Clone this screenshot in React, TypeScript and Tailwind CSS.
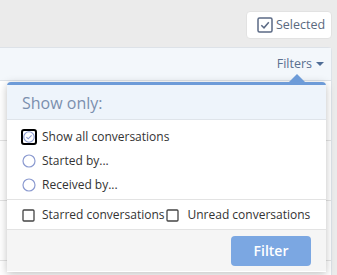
import React from 'react';

const RadioIcon = () => (
  <svg width="14" height="14" viewBox="0 0 14 14" className="shrink-0">
    <circle cx="7" cy="7" r="6" fill="white" stroke="#8b9ad0" strokeWidth="1.2" />
  </svg>
);

const BoxIcon = () => (
  <svg width="13" height="13" viewBox="0 0 13 13" className="shrink-0">
    <rect x="1" y="1" width="11" height="11" rx="1" fill="white" stroke="#444" strokeWidth="1.3" />
  </svg>
);

const App = () => {
  const rows = [0, 1, 2, 3];

  return (
    <div
      className="relative w-[337px] h-[275px] overflow-hidden bg-[#ebebeb]"
      style={{ fontFamily: '"Open Sans", "Noto Sans", sans-serif' }}
    >
      {/* top toolbar */}
      <div className="flex justify-end pt-[11px] pr-[5px] h-[47px]">
        <button className="flex items-center gap-[3px] h-[28px] w-[86px] pl-[10px] bg-white rounded-[4px] border border-[#e2e2e2] text-[12.5px] text-[#5b6a80]">
          <svg width="16" height="16" viewBox="0 0 16 16">
            <rect x="1" y="1" width="14" height="14" rx="1.5" fill="none" stroke="#5b6a85" strokeWidth="1.5" />
            <path d="M4.3 8.2 L7 10.8 L11.8 5.2" fill="none" stroke="#5b6a85" strokeWidth="1.5" />
          </svg>
          Selected
        </button>
      </div>

      {/* list panel */}
      <div className="mr-[5px] bg-white border border-l-0 border-[#dde2e8] rounded-tr-[4px]">
        <div className="flex justify-end items-center h-[33px] pr-[6px] bg-[#f3f7fb] border-b border-[#dde2e8] text-[12.5px] text-[#5a6f8f]">
          Filters
          <svg width="10" height="8" viewBox="0 0 10 8" className="ml-[3px]">
            <path d="M1 2 L9 2 L5 6 Z" fill="#4f6d96" />
          </svg>
        </div>
        {rows.map((r) => (
          <div key={r} className="h-[60px] border-b border-[#e3e3e3]" />
        ))}
      </div>

      {/* popup */}
      <div className="absolute left-[7px] top-[82px] w-[319px] h-[190px] bg-white rounded-t-[4px] border-t-[3px] border-[#6d9bd8] shadow-[0_2px_8px_rgba(0,0,0,0.25)]">
        <svg width="20" height="10" viewBox="0 0 20 10" className="absolute right-[19px] top-[-11px]">
          <path d="M0 10 L10 0 L20 10 Z" fill="#6d9bd8" />
        </svg>
        <div className="flex items-center h-[35px] pl-[15px] pt-[2px] bg-[#eef4fb] border-b border-[#dfe4ea] text-[16px] text-[#7b8fae]">
          Show only:
        </div>
        <div className="flex flex-col pt-[5px] pb-[2px] pl-[14px] border-b border-[#e3e3e3] text-[12px] text-[#333] whitespace-nowrap">
          <div className="flex items-center h-[24px] gap-[5px]">
            <span className="flex items-center justify-center w-[16px] h-[16px] rounded-[3px] border-2 border-black">
              <svg width="12" height="12" viewBox="0 0 12 12">
                <circle cx="6" cy="6" r="5.2" fill="white" stroke="#8b9ad0" strokeWidth="1.1" />
                <path d="M3.4 6.1 L5.2 7.8 L8.6 4.3" fill="none" stroke="#8b9ad0" strokeWidth="1.1" />
              </svg>
            </span>
            Show all conversations
          </div>
          <div className="flex items-center h-[24px] gap-[6px] pl-[1px]">
            <RadioIcon />
            Started by...
          </div>
          <div className="flex items-center h-[24px] gap-[6px] pl-[1px]">
            <RadioIcon />
            Received by...
          </div>
        </div>
        <div className="flex items-center h-[30px] pl-[15px] pt-[1px] border-b border-[#e3e3e3] text-[12px] text-[#333] whitespace-nowrap">
          <BoxIcon />
          <span className="ml-[7px]">Starred conversations</span>
          <span className="ml-[2px]"><BoxIcon /></span>
          <span className="ml-[8px]">Unread conversations</span>
        </div>
        <div className="flex justify-end items-center h-[41px] pr-[15px] bg-[#f5f5f5]">
          <button className="w-[80px] h-[30px] rounded-[4px] bg-[#7ba7e2] text-white text-[14px] font-semibold">
            Filter
          </button>
        </div>
      </div>
    </div>
  );
};

export default App;
